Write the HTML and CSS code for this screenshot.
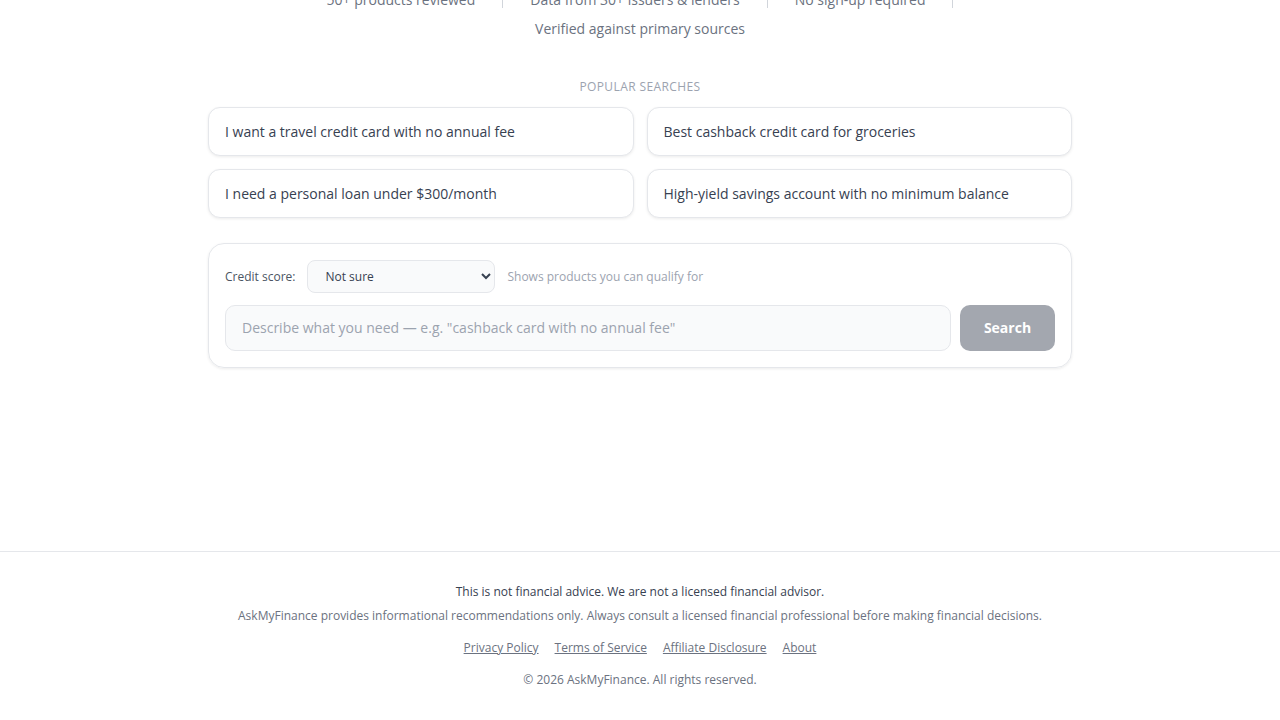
FILE: index.html
```html
<!DOCTYPE html>
<html lang="en">
<head>
<meta charset="utf-8">
<title>AskMyFinance</title>
<link rel="stylesheet" href="styles.css">
</head>
<body>
<div class="page">
  <main class="main">
    <ul class="stats">
      <li class="stat">50+ products reviewed</li>
      <li class="stat-sep" aria-hidden="true"></li>
      <li class="stat">Data from 30+ issuers &amp; lenders</li>
      <li class="stat-sep" aria-hidden="true"></li>
      <li class="stat">No sign-up required</li>
      <li class="stat-sep" aria-hidden="true"></li>
      <li class="stat">Verified against primary sources</li>
    </ul>

    <section class="popular">
      <h2 class="popular-title">Popular searches</h2>
      <div class="suggestions">
        <button class="suggestion" type="button">I want a travel credit card with no annual fee</button>
        <button class="suggestion" type="button">Best cashback credit card for groceries</button>
        <button class="suggestion" type="button">I need a personal loan under $300/month</button>
        <button class="suggestion" type="button">High-yield savings account with no minimum balance</button>
      </div>
    </section>

    <form class="search-box" onsubmit="return false">
      <div class="score-row">
        <label class="score-label" for="score">Credit score:</label>
        <select class="score-select" id="score">
          <option>Not sure</option>
          <option>Excellent (750+)</option>
          <option>Good (700–749)</option>
          <option>Fair (650–699)</option>
          <option>Poor (below 650)</option>
        </select>
        <span class="score-hint">Shows products you can qualify for</span>
      </div>
      <div class="query-row">
        <input class="query-input" type="text" placeholder="Describe what you need — e.g. &quot;cashback card with no annual fee&quot;">
        <button class="query-button" type="submit" disabled>Search</button>
      </div>
    </form>
  </main>

  <footer class="footer">
    <p class="footer-warning">This is not financial advice. We are not a licensed financial advisor.</p>
    <p class="footer-note">AskMyFinance provides informational recommendations only. Always consult a licensed financial professional before making financial decisions.</p>
    <nav class="footer-links">
      <a href="#">Privacy Policy</a>
      <a href="#">Terms of Service</a>
      <a href="#">Affiliate Disclosure</a>
      <a href="#">About</a>
    </nav>
    <p class="footer-copy">© 2026 AskMyFinance. All rights reserved.</p>
  </footer>
</div>
</body>
</html>
```

FILE: styles.css
```css
* {
  box-sizing: border-box;
}

html,
body {
  margin: 0;
  padding: 0;
  background: #ffffff;
}

body {
  font-family: "Open Sans", "Noto Sans", "Liberation Sans", sans-serif;
  color: #374151;
  overflow: hidden;
}

.page {
  min-height: 720px;
  display: flex;
  flex-direction: column;
}

.main {
  flex: 1;
  width: 864px;
  margin: 0 auto;
}

/* trust stats (top of the hero, partly scrolled out of view) */
.stats {
  list-style: none;
  margin: -10px auto 0;
  padding: 0;
  max-width: 720px;
  display: flex;
  flex-wrap: wrap;
  justify-content: center;
  align-items: center;
  column-gap: 27px;
  row-gap: 9px;
  font-size: 14px;
  line-height: 20px;
  color: #6b7280;
}

.stat-sep {
  width: 1px;
  height: 16px;
  background: #d1d5db;
}

/* popular searches */
.popular {
  margin-top: 40px;
}

.popular-title {
  margin: 0 0 12px;
  text-align: center;
  font-size: 12px;
  line-height: 16px;
  font-weight: 400;
  letter-spacing: 0.4px;
  text-transform: uppercase;
  color: #9ca3af;
}

.suggestions {
  display: grid;
  grid-template-columns: 1fr 1fr;
  gap: 13px 13px;
}

.suggestion {
  height: 49px;
  padding: 0 16px;
  text-align: left;
  font: inherit;
  font-size: 14px;
  color: #374151;
  background: #ffffff;
  border: 1px solid #e5e7eb;
  border-radius: 12px;
  box-shadow: 0 1px 3px rgba(0, 0, 0, 0.08);
  cursor: pointer;
}

/* search box */
.search-box {
  margin-top: 25px;
  padding: 16px;
  border: 1px solid #e5e7eb;
  border-radius: 16px;
  box-shadow: 0 1px 3px rgba(0, 0, 0, 0.08);
  display: flex;
  flex-direction: column;
  gap: 12px;
}

.score-row {
  display: flex;
  align-items: center;
  gap: 12px;
}

.score-label {
  font-size: 12px;
  color: #4b5563;
}

.score-select {
  width: 188px;
  height: 33px;
  padding: 0 13px;
  font: inherit;
  font-size: 12px;
  color: #374151;
  background: #f9fafb;
  border: 1px solid #e5e7eb;
  border-radius: 8px;
}

.score-hint {
  font-size: 12px;
  color: #9ca3af;
}

.query-row {
  display: flex;
  gap: 9px;
}

.query-input {
  flex: 1;
  height: 46px;
  padding: 0 16px 1px;
  font: inherit;
  font-size: 14px;
  color: #374151;
  background: #f9fafb;
  border: 1px solid #e5e7eb;
  border-radius: 10px;
  outline: none;
}

.query-input::placeholder {
  color: #9ca3af;
}

.query-button {
  width: 95px;
  height: 46px;
  padding: 0 0 1px;
  font: inherit;
  font-size: 14px;
  font-weight: 700;
  color: #ffffff;
  background: #a3a7af;
  border: none;
  border-radius: 10px;
}

/* footer */
.footer {
  border-top: 1px solid #e5e7eb;
  padding: 32px 16px 32px;
  text-align: center;
  font-size: 12px;
  line-height: 16px;
  color: #6b7280;
}

.footer p {
  margin: 0;
}

.footer-warning {
  color: #374151;
}

.footer-note {
  margin-top: 8px !important;
}

.footer-links {
  margin-top: 16px;
  display: flex;
  justify-content: center;
  gap: 16px;
}

.footer-links a {
  color: #6b7280;
  text-decoration: underline;
}

.footer-copy {
  margin-top: 16px !important;
}
```
